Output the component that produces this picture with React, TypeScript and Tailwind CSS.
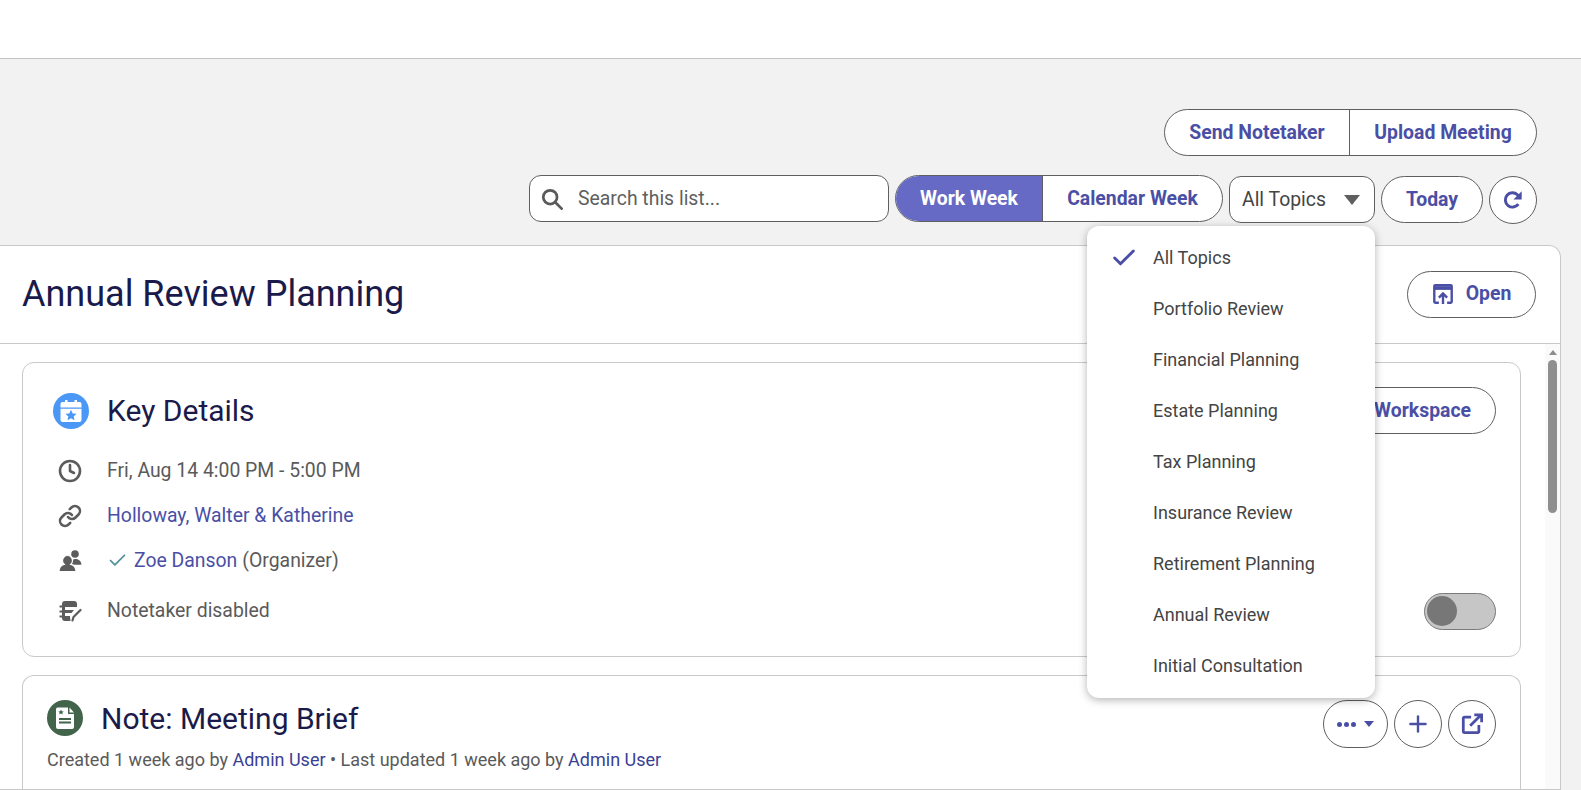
import { Check, Clock, Link as LinkIcon, Plus } from 'lucide-react';

const topics = [
  'All Topics',
  'Portfolio Review',
  'Financial Planning',
  'Estate Planning',
  'Tax Planning',
  'Insurance Review',
  'Retirement Planning',
  'Annual Review',
  'Initial Consultation',
];

function CalendarStar() {
  return (
    <svg viewBox="0 0 36 36" className="w-9 h-9 shrink-0">
      <circle cx="18" cy="18" r="18" fill="#4a97f5" />
      <path d="M7.500 11a2 2 0 0 1 2-2h2.500V7h2.500v2h7V7H24v2h2.500a2 2 0 0 1 2 2v3.500h-21z" fill="#fff" />
      <path d="M7.500 15.700h21V27a2 2 0 0 1-2 2h-17a2 2 0 0 1-2-2z" fill="#fff" />
      <path d="M18 16.800l1.700 3.600 3.900.4-2.900 2.600.8 3.900-3.500-2-3.500 2 .8-3.900-2.900-2.600 3.900-.4z" fill="#4a97f5" />
    </svg>
  );
}

function NoteIcon() {
  return (
    <svg viewBox="0 0 36 36" className="w-9 h-9 shrink-0">
      <circle cx="18" cy="18" r="18" fill="#41644a" />
      <path d="M10.500 7.500H21v6.500h6V27a2 2 0 0 1-2 2H11a2 2 0 0 1-2-2V9a1.500 1.500 0 0 1 1.500-1.500z" fill="#fff" />
      <path d="M22.500 7.500l4.500 5h-4.500z" fill="#fff" />
      <path d="M14 9.500l.8 1.700 1.900.2-1.400 1.300.4 1.900-1.700-1-1.700 1 .4-1.900-1.400-1.300 1.900-.2z" fill="#41644a" />
      <path d="M12 19h12M12 22.500h12" stroke="#41644a" strokeWidth="1.800" />
    </svg>
  );
}

function PeopleIcon() {
  return (
    <svg viewBox="0 0 24 24" className="w-6 h-6 text-[#5c5c5c]" fill="currentColor">
      <circle cx="17" cy="5" r="3.800" />
      <path d="M13 15c.5-3.500 2-5 4.500-5s5.500 1.500 6 5.500c-2 .5-6.500.5-10.500-.5z" />
      <path d="M9.500 6.500a5 5 0 0 1 5 5c0 1.500-.7 3-1.700 3.800 3.200.8 5.200 3 5.200 7.200H1c0-4.200 2-6.400 5.200-7.200-1-.8-1.700-2.300-1.700-3.800a5 5 0 0 1 5-5z" stroke="#fff" strokeWidth="1.200" />
    </svg>
  );
}

function NotetakerIcon() {
  return (
    <svg viewBox="0 0 24 24" className="w-6 h-6 text-[#5c5c5c]" fill="none" stroke="currentColor">
      <path d="M4 5a3 3 0 0 1 3-3h9a3 3 0 0 1 3 3v3H7v3h9l-2.500 3H7v3h5v.500L12.500 22H7a3 3 0 0 1-3-3z" fill="currentColor" stroke="none" />
      <path d="M1.500 7.500h5M1.500 12.500h5M1.500 17.500h5" strokeWidth="2.200" />
      <path d="M14.500 21.500l1-3.500 7-7" strokeWidth="2.200" strokeLinecap="round" />
    </svg>
  );
}

function OpenIcon() {
  return (
    <svg viewBox="0 0 24 24" className="w-[22px] h-[22px] text-[#4a4fa5]" fill="none" stroke="currentColor" strokeWidth="2.600">
      <path d="M7.500 21.500H3.500a1 1 0 0 1-1-1v-17a1 1 0 0 1 1-1h17a1 1 0 0 1 1 1v17a1 1 0 0 1-1 1h-4" />
      <path d="M2.500 5.500h19" strokeWidth="4" />
      <path d="M12 23V12M7.500 16l4.500-4.500 4.500 4.500" />
    </svg>
  );
}

function RedoIcon() {
  return (
    <svg viewBox="0 0 24 24" className="w-[22px] h-[22px] text-[#4a4fa5]" fill="none">
      <path d="M17.800 16.500A7.800 7.800 0 1 1 16.800 6.300L19 8.500" stroke="currentColor" strokeWidth="3.200" />
      <path d="M21.500 2.500v9h-9z" fill="currentColor" />
    </svg>
  );
}

function SearchIcon() {
  return (
    <svg viewBox="0 0 24 24" className="w-[22px] h-[22px] text-[#5a5a5a]" fill="none" stroke="currentColor" strokeWidth="3">
      <circle cx="10" cy="10" r="7.500" />
      <path d="M15.500 15.500L22.500 22.500" strokeLinecap="round" />
    </svg>
  );
}

function PopoutIcon() {
  return (
    <svg viewBox="0 0 24 24" className="w-[22px] h-[22px]" fill="none" stroke="currentColor" strokeWidth="3">
      <path d="M11 4.500H4a1.500 1.500 0 0 0-1.500 1.500v14A1.500 1.500 0 0 0 4 21.500h14a1.500 1.500 0 0 0 1.500-1.500v-7" />
      <path d="M10 14L21 3M14.500 2h8v8" />
    </svg>
  );
}

function Row({ icon, children, className }: { icon: React.ReactNode; children: React.ReactNode; className?: string }) {
  return (
    <div className={`flex items-center ${className ?? ''}`}>
      <div className="w-[54px] pl-[5px] flex justify-start shrink-0">{icon}</div>
      <div className="flex-1 flex items-center text-[19.400px] text-[#5a5a5a]">{children}</div>
    </div>
  );
}

export default function App() {
  return (
    <div className="h-screen overflow-hidden bg-[#f2f2f2] font-['Roboto',sans-serif] relative flex flex-col">
      <div className="h-[59px] shrink-0 bg-white border-b border-[#c4c4c4]" />

      <div className="h-[186px] shrink-0 pr-[44px] pt-[50px] flex flex-col items-end">
        <div className="flex h-[47px] w-[373px] bg-white border border-[#5f5f5f] rounded-full text-[19.400px] font-bold text-[#4a4fa5]">
          <div className="w-[185px] flex items-center justify-center border-r border-[#5f5f5f]">Send Notetaker</div>
          <div className="flex-1 flex items-center justify-center">Upload Meeting</div>
        </div>

        <div className="flex items-start mt-[19px] gap-[6px]">
          <div className="w-[360px] h-[47px] bg-white border border-[#5f5f5f] rounded-[12px] flex items-center pl-[11px] text-[19.400px] text-[#5f5f5f]">
            <SearchIcon />
            <span className="ml-[15px]">Search this list...</span>
          </div>
          <div className="flex w-[328px] h-[47px] bg-white border border-[#5f5f5f] rounded-full text-[19.400px] font-bold overflow-hidden">
            <div className="w-[147px] bg-[#666ac4] text-white flex items-center justify-center border-r border-[#5f5f5f]">Work Week</div>
            <div className="flex-1 flex items-center justify-center text-[#4a4fa5]">Calendar Week</div>
          </div>
          <div className="mt-[1px] w-[146px] h-[47px] bg-white border border-[#5f5f5f] rounded-[12px] flex items-center justify-between pl-[12px] pr-[14px] text-[19.400px] text-[#444]">
            <span>All Topics</span>
            <span className="w-0 h-0 border-l-[8px] border-r-[8px] border-t-[10px] border-l-transparent border-r-transparent border-t-[#5f5f5f]" />
          </div>
          <div className="mt-[1px] w-[102px] h-[47px] bg-white border border-[#5f5f5f] rounded-full flex items-center justify-center text-[19.400px] font-bold text-[#4a4fa5]">Today</div>
          <div className="mt-[1px] w-[48px] h-[48px] bg-white border border-[#5f5f5f] rounded-full flex items-center justify-center">
            <RedoIcon />
          </div>
        </div>
      </div>

      <div className="flex-1 min-h-0 mr-[20px] bg-white border border-l-0 border-[#c9c9c9] rounded-tr-[12px] flex flex-col">
        <div className="h-[98px] shrink-0 border-b border-[#c9c9c9] flex items-center justify-between pl-[22px] pr-[24px] pb-[1px]">
          <h1 className="text-[36px] text-[#1a1a4b]">Annual Review Planning</h1>
          <div className="w-[129px] h-[47px] border border-[#5f5f5f] rounded-full flex items-center justify-center gap-[12px] text-[19.400px] font-bold text-[#4a4fa5]">
            <OpenIcon />
            <span>Open</span>
          </div>
        </div>

        <div className="flex-1 min-h-0 flex overflow-hidden">
          <div className="flex-1 pl-[22px] pr-[24px] pt-[18px] flex flex-col gap-[18px]">
            <div className="h-[295px] shrink-0 border border-[#c9c9c9] rounded-[12px] pl-[30px] pr-[24px] pt-[24px]">
              <div className="flex items-center justify-between h-[47px]">
                <div className="flex items-center gap-[18px]">
                  <CalendarStar />
                  <h2 className="text-[30px] text-[#1a1a4b]">Key Details</h2>
                </div>
                <div className="h-[47px] border border-[#5f5f5f] rounded-full flex items-center pl-[80px] pr-[24px] text-[19.400px] font-bold text-[#4a4fa5]">Workspace</div>
              </div>
              <Row className="mt-[14px] h-[45px]" icon={<Clock className="w-6 h-6 text-[#5c5c5c]" strokeWidth={2.600} />}>
                Fri, Aug 14 4:00 PM - 5:00 PM
              </Row>
              <Row className="h-[45px]" icon={<LinkIcon className="w-6 h-6 text-[#5c5c5c]" strokeWidth={2.600} />}>
                <span className="text-[#4a4fa5]">Holloway, Walter &amp; Katherine</span>
              </Row>
              <Row className="h-[45px]" icon={<PeopleIcon />}>
                <Check className="w-[21px] h-[21px] text-[#4f8f98] mr-[6px]" strokeWidth={2} />
                <span className="text-[#4a4fa5]">Zoe Danson</span>
                <span className="ml-[5px]">(Organizer)</span>
              </Row>
              <div className="flex items-center justify-between h-[56px]">
                <Row className="flex-1" icon={<NotetakerIcon />}>Notetaker disabled</Row>
                <div className="w-[72px] h-[37px] rounded-full bg-[#c6c6c6] border border-[#7a7a7a] flex items-center pl-[2px]">
                  <div className="w-[30px] h-[30px] rounded-full bg-[#777]" />
                </div>
              </div>
            </div>

            <div className="flex-1 border border-b-0 border-[#c9c9c9] rounded-t-[12px] pl-[24px] pr-[24px] pt-[24px]">
              <div className="flex items-start justify-between">
                <div className="flex items-center gap-[18px] h-[40px] mt-[-2px]">
                  <NoteIcon />
                  <h2 className="text-[30px] text-[#1a1a4b]">Note: Meeting Brief</h2>
                </div>
                <div className="flex items-center gap-[6px] text-[#4a4fa5]">
                  <div className="w-[65px] h-[48px] border border-[#5f5f5f] rounded-full flex items-center justify-center gap-[8px]">
                    <span className="flex gap-[2px]">
                      <span className="w-[5px] h-[5px] rounded-full bg-[#4a4fa5]" />
                      <span className="w-[5px] h-[5px] rounded-full bg-[#4a4fa5]" />
                      <span className="w-[5px] h-[5px] rounded-full bg-[#4a4fa5]" />
                    </span>
                    <span className="w-0 h-0 border-l-[5px] border-r-[5px] border-t-[6px] border-l-transparent border-r-transparent border-t-[#4a4fa5]" />
                  </div>
                  <div className="w-[48px] h-[48px] border border-[#5f5f5f] rounded-full flex items-center justify-center">
                    <Plus className="w-[26px] h-[26px]" strokeWidth={2.200} />
                  </div>
                  <div className="w-[48px] h-[48px] border border-[#5f5f5f] rounded-full flex items-center justify-center">
                    <PopoutIcon />
                  </div>
                </div>
              </div>
              <p className="mt-[-2px] text-[18px] text-[#5a5a5a]">
                Created 1 week ago by <span className="text-[#3a3f96]">Admin User</span> • Last updated 1 week ago by <span className="text-[#3a3f96]">Admin User</span>
              </p>
            </div>
          </div>

          <div className="w-[15px] shrink-0 bg-[#fafafa] flex flex-col items-center pt-[6px]">
            <span className="w-0 h-0 border-l-[4px] border-r-[4px] border-b-[5px] border-l-transparent border-r-transparent border-b-[#8c8c8c]" />
            <div className="mt-[5px] w-[9px] h-[153px] rounded-full bg-[#8f8f8f]" />
          </div>
        </div>
      </div>

      <div className="absolute left-[1087px] top-[226px] w-[288px] h-[472px] bg-white rounded-[12px] shadow-[0_2px_8px_rgba(0,0,0,0.3)] pt-[6px]">
        {topics.map((topic, i) => (
          <div key={topic} className="h-[51px] flex items-center text-[18px] text-[#444]">
            <div className="w-[66px] pl-[23px] shrink-0">
              {i === 0 && <Check className="w-[28px] h-[28px] text-[#4a4fa5]" strokeWidth={2.500} />}
            </div>
            <span>{topic}</span>
          </div>
        ))}
      </div>
    </div>
  );
}
